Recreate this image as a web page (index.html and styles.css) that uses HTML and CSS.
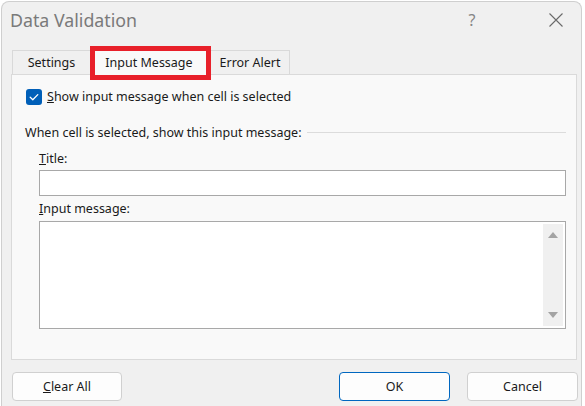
FILE: index.html
```html
<!DOCTYPE html>
<html>
<head>
<meta charset="utf-8">
<link rel="stylesheet" href="styles.css">
</head>
<body>
<div class="window">
  <div class="titlebar">
    <span class="title">Data Validation</span>
    <span class="help">?</span>
    <span class="close"><svg width="14" height="14" viewBox="0 0 14 14"><path d="M0.5 0.5 L13.5 13.5 M13.5 0.5 L0.5 13.5" stroke="#6a6a6a" stroke-width="1.1" fill="none"/></svg></span>
  </div>
  <div class="content">
    <div class="tabs">
      <div class="tab tab-settings">Settings</div>
      <div class="tab tab-active">Input Message</div>
      <div class="tab tab-error">Error Alert</div>
    </div>
    <div class="panel">
      <div class="check-row">
        <span class="checkbox"><svg width="16" height="16" viewBox="0 0 16 16"><path d="M4.2 8.2 L6.8 10.7 L11.8 5.6" stroke="#fff" stroke-width="1.3" fill="none" stroke-linecap="round" stroke-linejoin="round"/></svg></span>
        <span class="check-label"><u>S</u>how input message when cell is selected</span>
      </div>
      <div class="group-head">
        <span>When cell is selected, show this input message:</span>
        <span class="rule"></span>
      </div>
      <div class="fields">
        <div class="label label-title"><u>T</u>itle:</div>
        <div class="input"></div>
        <div class="label label-msg"><u>I</u>nput message:</div>
        <div class="textarea">
          <div class="scrollbar">
            <svg width="10" height="6" viewBox="0 0 10 6"><path d="M0 6 L5 0 L10 6 Z" fill="#a3a3a3"/></svg>
            <svg width="10" height="6" viewBox="0 0 10 6"><path d="M0 0 L5 6 L10 0 Z" fill="#a3a3a3"/></svg>
          </div>
        </div>
      </div>
    </div>
    <div class="buttons">
      <div class="btn btn-clear"><u>C</u>lear All</div>
      <div class="spacer"></div>
      <div class="btn btn-ok">OK</div>
      <div class="btn btn-cancel">Cancel</div>
    </div>
  </div>
</div>
</body>
</html>
```
FILE: styles.css
```css
html, body {
  margin: 0;
  padding: 0;
  background: #ffffff;
  overflow: hidden;
}
body {
  width: 585px;
  height: 406px;
  font-family: "Noto Sans", "Open Sans", sans-serif;
  font-size: 12.5px;
  color: #1a1a1a;
}
.window {
  margin: 1px 0 0 1px;
  width: 581px;
  height: 405px;
  border: 1px solid #cfcfcf;
  border-bottom: none;
  border-radius: 8px 8px 0 0;
  background: #f0f0f0;
  box-sizing: border-box;
  overflow: hidden;
}
.titlebar {
  height: 45px;
  display: flex;
  align-items: flex-start;
  padding-top: 7px;
  box-sizing: border-box;
}
.title {
  margin-left: 8px;
  font-size: 17.8px;
  color: #7a7a7a;
  line-height: 22px;
}
.help {
  margin-left: auto;
  margin-right: 0;
  font-size: 16px;
  color: #858585;
  line-height: 22px;
  width: 14px;
  text-align: center;
  position: relative;
  left: -70px;
}
.close {
  width: 14px;
  height: 14px;
  margin-top: 4px;
  margin-right: 18px;
  display: block;
}
.close svg { display: block; }
.content {
  padding-left: 9px;
}
.tabs {
  display: flex;
  align-items: flex-end;
  height: 27px;
  margin-left: 1px;
}
.tab {
  height: 24px;
  box-sizing: border-box;
  border: 1px solid #d9d9d9;
  border-bottom: none;
  background: #f0f0f0;
  display: flex;
  align-items: center;
  justify-content: center;
  line-height: 18px;
  padding-top: 1px;
}
.tab-settings {
  width: 78px;
  border-right: none;
}
.tab-active {
  width: 121px;
  background: #f9f9f9;
  position: relative;
  z-index: 2;
  margin-bottom: -1px;
  height: 28px;
  padding-top: 2px;
  padding-right: 3px;
}
.tab-active::after {
  content: "";
  position: absolute;
  left: -1px;
  right: -1px;
  top: -2px;
  bottom: -5px;
  border: 5px solid #e8202a;
}
.tab-error {
  width: 79px;
  border-left: none;
}
.panel {
  width: 566px;
  height: 286px;
  box-sizing: border-box;
  border: 1px solid #dadada;
  background: #f9f9f9;
  padding: 14px 10px 0 13px;
  position: relative;
  z-index: 1;
}
.check-row {
  display: flex;
  align-items: center;
  height: 16px;
}
.checkbox {
  width: 16px;
  height: 16px;
  border-radius: 3px;
  background: #005fb8;
  display: block;
  margin-left: 1px;
}
.checkbox svg { display: block; }
.check-label {
  margin-left: 5px;
  line-height: 18px;
}
.group-head {
  display: flex;
  align-items: center;
  margin-top: 19px;
  height: 18px;
  line-height: 18px;
}
.rule {
  flex: 1;
  height: 1px;
  background: #dcdcdc;
  margin-left: 5px;
  position: relative;
  top: -1px;
}
.fields {
  padding-left: 14px;
}
.label {
  line-height: 18px;
  height: 18px;
}
.label-title {
  margin-top: 8px;
  margin-bottom: 2px;
}
.label-msg {
  margin-top: 4px;
  margin-bottom: 3px;
}
.input {
  height: 26px;
  box-sizing: border-box;
  border: 1px solid #a8a8a8;
  background: #ffffff;
}
.textarea {
  height: 108px;
  box-sizing: border-box;
  border: 1px solid #a8a8a8;
  background: #ffffff;
  display: flex;
  justify-content: flex-end;
  padding: 2px;
}
.scrollbar {
  width: 20px;
  background: #f0f0f0;
  display: flex;
  flex-direction: column;
  align-items: center;
  justify-content: space-between;
  padding: 8px 0 8px;
  box-sizing: border-box;
}
.scrollbar svg { display: block; }
.buttons {
  display: flex;
  margin-top: 12px;
  width: 567px;
  padding-left: 1px;
  box-sizing: border-box;
}
.spacer { flex: 1; }
.btn {
  width: 111px;
  height: 29px;
  box-sizing: border-box;
  border: 1px solid #d0d0d0;
  border-radius: 4px;
  background: #fdfdfd;
  display: flex;
  align-items: center;
  justify-content: center;
  line-height: 18px;
}
.btn-clear { width: 110px; }
.btn-ok {
  border-color: #0067c0;
  margin-right: 17px;
}
```
